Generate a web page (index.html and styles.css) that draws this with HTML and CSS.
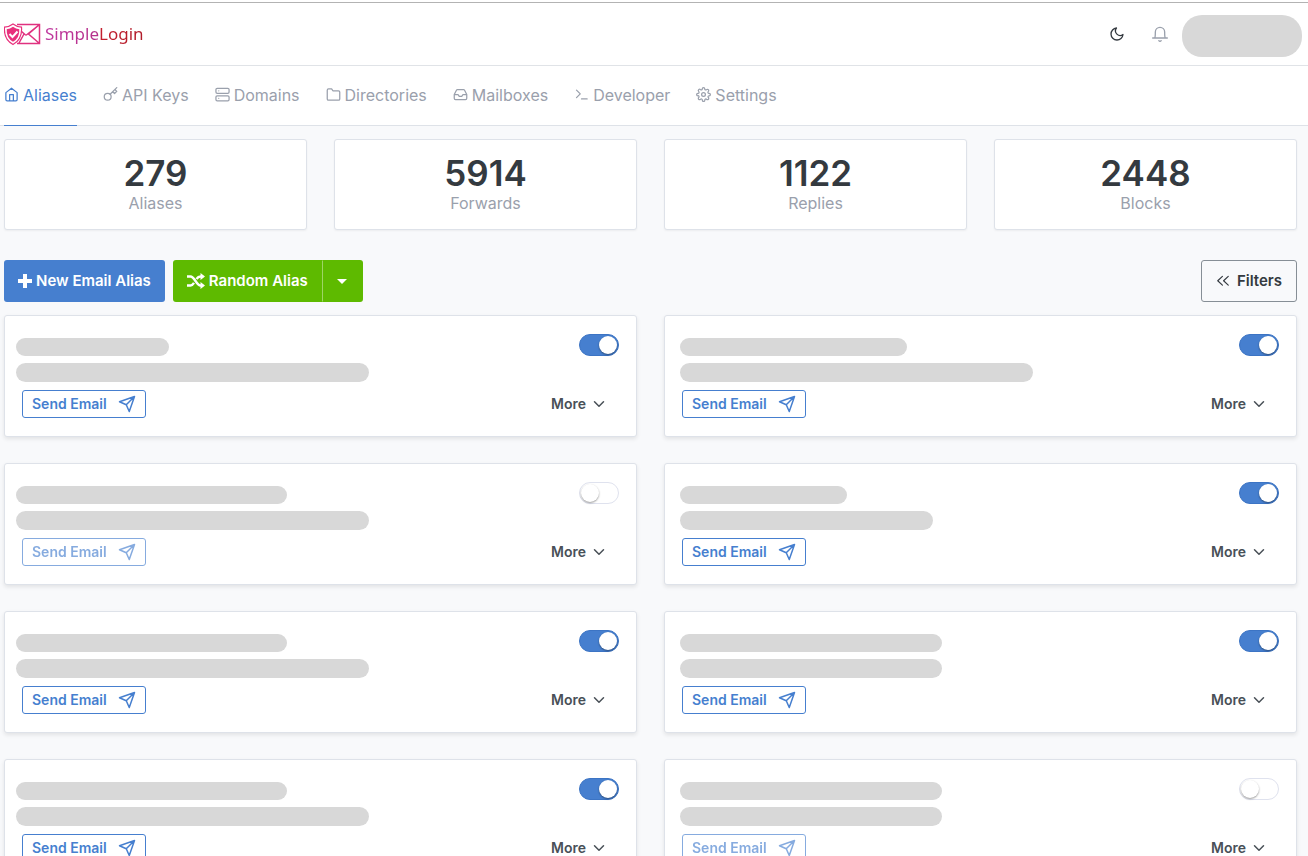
FILE: index.html
```html
<!DOCTYPE html>
<html lang="en">
<head>
<meta charset="utf-8">
<title>Aliases | SimpleLogin</title>
<link rel="stylesheet" href="styles.css">
</head>
<body>
<svg class="sprite" aria-hidden="true">
  <symbol id="send" viewBox="0 0 24 24"><path d="M22 2L11 13M22 2l-7 20-4-9-9-4z"/></symbol>
  <symbol id="down" viewBox="0 0 24 24"><path d="M6 9l6 6 6-6"/></symbol>
</svg>

<header class="header">
  <a class="logo" href="#">
    <svg class="logo-mark" viewBox="0 0 38 24" aria-hidden="true">
      <path d="M13 2.500h22.500v19H13M35.500 2.500L24.500 12l11 9.500M17 9l4 3.500q1 .8 2 0L35.500 2.500M20 12l-5 9" fill="none" stroke="#e0317f" stroke-width="1.500"/>
      <path d="M9 2Q13 5 17.500 5.200q1 12-8.500 17.300Q-.5 17.500.5 5.200 5 5 9 2z" fill="#fff" stroke="#e8307c" stroke-width="1.200"/>
      <path d="M9 4.800q3 2.300 6.300 2.500Q15.800 16 9 19.800 2.200 16 2.700 7.300 6 7.100 9 4.800z" fill="#e8307c" stroke="none"/>
      <path d="M5.500 12l3 3 5-5.500" fill="none" stroke="#fff" stroke-width="2"/>
    </svg>
    <span class="logo-text">SimpleLogin</span>
  </a>
  <div class="header-tools">
    <button class="icon-btn dark" aria-label="Dark mode"><svg viewBox="0 0 24 24"><path d="M21 12.800A9 9 0 1 1 11.200 3 7 7 0 0 0 21 12.800z"/></svg></button>
    <button class="icon-btn" aria-label="Notifications"><svg viewBox="0 0 24 24"><path d="M1 18h22M4 18c1-1 1-3 1-9a7 7 0 0 1 14 0c0 6 0 8 1 9M10.300 22a2 2 0 0 0 3.400 0"/></svg></button>
    <span class="account"></span>
  </div>
</header>

<nav class="nav">
  <a class="active" href="#"><svg viewBox="0 0 24 24"><path d="M3 9l9-7 9 7v11a2 2 0 0 1-2 2H5a2 2 0 0 1-2-2zM9 22V12h6v10"/></svg>Aliases</a>
  <a href="#"><svg viewBox="0 0 24 24"><circle cx="7.500" cy="15.500" r="5.500"/><path d="M11.400 11.600L22 1M15.500 7.500l3 3L22 7l-3-3"/></svg>API Keys</a>
  <a href="#"><svg viewBox="0 0 24 24"><rect x="1.500" y="2" width="21" height="8" rx="2"/><rect x="1.500" y="14" width="21" height="8" rx="2"/><path d="M6 6h.01M6 18h.01"/></svg>Domains</a>
  <a href="#"><svg viewBox="0 0 24 24"><path d="M22 19a2 2 0 0 1-2 2H4a2 2 0 0 1-2-2V5a2 2 0 0 1 2-2h5l2 3h9a2 2 0 0 1 2 2z"/></svg>Directories</a>
  <a href="#"><svg viewBox="0 0 24 24"><path d="M22 12h-6l-2 3h-4l-2-3H2M5.500 5.100L2 12v6a2 2 0 0 0 2 2h16a2 2 0 0 0 2-2v-6l-3.500-6.900A2 2 0 0 0 16.800 4H7.200a2 2 0 0 0-1.700 1.100z"/></svg>Mailboxes</a>
  <a href="#"><svg viewBox="0 0 24 24"><path d="M4 17l6-6-6-6M12 19h9"/></svg>Developer</a>
  <a href="#"><svg viewBox="0 0 24 24"><circle cx="12" cy="12" r="3"/><path d="M19.400 15a1.650 1.650 0 0 0 .33 1.820l.06.06a2 2 0 1 1-2.830 2.830l-.06-.06a1.650 1.650 0 0 0-2.800 1.170V21a2 2 0 0 1-4 0v-.09a1.650 1.650 0 0 0-2.900-1.260l-.06.06a2 2 0 1 1-2.830-2.830l.06-.06A1.650 1.650 0 0 0 3.090 14H3a2 2 0 0 1 0-4h.09a1.650 1.650 0 0 0 1.260-2.900l-.06-.06a2 2 0 1 1 2.830-2.830l.06.06A1.650 1.650 0 0 0 10 3.090V3a2 2 0 0 1 4 0v.09a1.650 1.650 0 0 0 2.820 1.180l.06-.06a2 2 0 1 1 2.830 2.830l-.06.06A1.650 1.650 0 0 0 20.910 10H21a2 2 0 0 1 0 4h-.09a1.650 1.650 0 0 0-1.510 1z"/></svg>Settings</a>
</nav>

<main class="main">
  <section class="stats">
    <div class="stat"><strong>279</strong><span>Aliases</span></div>
    <div class="stat"><strong>5914</strong><span>Forwards</span></div>
    <div class="stat"><strong>1122</strong><span>Replies</span></div>
    <div class="stat"><strong>2448</strong><span>Blocks</span></div>
  </section>

  <div class="toolbar">
    <button class="btn primary"><svg viewBox="0 0 14 14"><path d="M5 0h4v5h5v4H9v5H5V9H0V5h5z"/></svg>New Email Alias</button>
    <div class="btn-group">
      <button class="btn success"><svg class="shuffle" viewBox="0 0 18 16"><path d="M0 3.500h3.500c4 0 6 9 10 9H15M0 12.500h3.500c1.500 0 2.500-1 3.500-2.600M9.500 6c1-1.500 2-2.500 4-2.500H15" fill="none" stroke="#fff" stroke-width="2.400"/><path d="M13.500 0L18 3.500 13.500 7zM13.500 9l4.500 3.500-4.500 3.500z"/></svg>Random Alias</button>
      <button class="btn success split" aria-label="More random alias options"><span class="caret"></span></button>
    </div>
    <button class="btn filters"><svg viewBox="0 0 24 24"><path d="M11 19l-8-7.500L11 4M21 19l-8-7.500L21 4"/></svg>Filters</button>
  </div>

  <section class="aliases" id="aliases"></section>
</main>
<script src="app.js"></script>
</body>
</html>
```
FILE: styles.css
```css
* { box-sizing: border-box; }
body {
  margin: 0;
  height: 100vh;
  overflow: hidden;
  background: #f8f9fb;
  color: #343a40;
  font-family: Inter, "Liberation Sans", sans-serif;
  font-size: 16px;
  line-height: 24px;
}
button { font: inherit; color: inherit; cursor: pointer; }
a { color: inherit; text-decoration: none; }
svg { fill: none; stroke: currentColor; stroke-width: 2; stroke-linecap: round; stroke-linejoin: round; flex: none; }
.sprite { position: absolute; width: 0; height: 0; }

.header {
  display: flex;
  align-items: center;
  justify-content: space-between;
  height: 66px;
  padding: 2px 6px 0 4px;
  background: linear-gradient(#b3b3b3, #b3b3b3) 0 2px / 100% 1px no-repeat #fff;
  border-bottom: 1px solid #e0e3e7;
}
.logo { display: flex; align-items: center; gap: 3px; }
.logo-mark { width: 38px; height: 24px; stroke-linecap: butt; stroke-linejoin: miter; }
.logo-text {
  font-family: "Noto Sans", sans-serif;
  font-size: 17px;
  background: linear-gradient(90deg, #c0399f 0%, #b5308b 54%, #c4202f 56%, #b01c2a 100%);
  background-clip: text;
  -webkit-background-clip: text;
  color: transparent;
}
.header-tools { display: flex; align-items: center; gap: 14px; padding-top: 4px; }
.icon-btn { display: flex; padding: 0 6px; border: 0; background: none; color: #9aa0ac; margin-bottom: 4px; }
.icon-btn svg { width: 16px; height: 16px; }
.icon-btn.dark { color: #343a40; margin-right: 1px; }
.account { width: 120px; height: 42px; margin-left: -6px; border-radius: 20px; background: #d8d8d8; }

.nav {
  display: flex;
  gap: 26px;
  height: 60px;
  padding-left: 4px;
  background: #fff;
  border-bottom: 1px solid #dee2e8;
}
.nav a { display: flex; align-items: center; gap: 4px; color: #9aa0ac; margin-bottom: -1px; padding-bottom: 2px; border-bottom: 1px solid transparent; }
.nav a.active { color: #467fcf; border-color: #467fcf; }
.nav svg { width: 15px; height: 15px; }

.main { padding: 13px 11px 0 4px; }
.stats { display: grid; grid-template-columns: repeat(4, 1fr); gap: 27px; }
.stat, .card {
  background: #fff;
  border: 1px solid #dee2e9;
  border-radius: 3px;
  box-shadow: 0 1px 2px rgba(0, 0, 0, .05);
}
.stat { display: flex; flex-direction: column; align-items: center; height: 91px; padding-top: 15px; color: #9aa0ac; }
.stat strong { color: #343a40; font-size: 35px; line-height: 36px; font-weight: 600; }

.toolbar { display: flex; gap: 8px; margin: 30px 0 13px; }
.btn {
  display: flex;
  align-items: center;
  gap: 4px;
  height: 42px;
  padding: 0 13px;
  border: 1px solid transparent;
  border-radius: 3px;
  font-size: 15px;
  font-weight: 600;
}
.btn svg { width: 14px; height: 14px; }
.primary { background: #467fcf; color: #fff; }
.success { background: #5eba00; color: #fff; }
.primary svg, .success svg { fill: #fff; stroke: none; }
.btn svg.shuffle { width: 18px; height: 16px; stroke-linecap: butt; }
.btn-group { display: flex; }
.btn-group .btn:first-child { border-radius: 3px 0 0 3px; }
.split { width: 41px; justify-content: center; border-radius: 0 3px 3px 0; border-left-color: #9ed566; }
.caret { border: 5px solid transparent; border-top-color: #fff; border-bottom: 0; }
.filters { gap: 7px; padding: 0 14px; margin-left: auto; background: transparent; border-color: #868e96; color: #343a40; }

.aliases { display: grid; grid-template-columns: 1fr 1fr; gap: 26px 27px; }
.card { padding: 18px 17px; height: 122px; box-shadow: 0 2px 4px rgba(0, 0, 0, .09); }
.card-top { display: flex; justify-content: space-between; height: 56px; }
.lines { padding-top: 4px; margin-left: -6px; display: grid; gap: 7px; align-content: start; }
.card:nth-child(even) .lines { margin-left: -2px; }
.bar { display: block; height: 18px; border-radius: 10px; background: #d8d8d8; }
.bar + .bar { height: 19px; }
.card-bottom { display: flex; justify-content: space-between; align-items: center; font-size: 14px; font-weight: 600; }
.send {
  display: flex;
  align-items: center;
  justify-content: space-between;
  width: 124px;
  height: 28px;
  padding: 0 9px;
  border: 1px solid #467fcf;
  border-radius: 3px;
  background: #fff;
  color: #467fcf;
}
.send svg { width: 18px; height: 18px; }
.send:disabled { opacity: .65; }
.more { display: flex; align-items: center; gap: 4px; padding: 0 11px; border: 0; background: none; color: #495057; }
.more svg { width: 18px; height: 18px; }

.switch {
  appearance: none;
  width: 40px;
  height: 22px;
  margin: 0;
  padding: 1px;
  border: 1px solid #dfe2ee;
  border-radius: 11px;
  background: #fff;
  cursor: pointer;
}
.switch::before {
  content: "";
  display: block;
  width: 18px;
  height: 18px;
  border-radius: 50%;
  background: #fff;
  box-shadow: 0 1px 2px rgba(0, 0, 0, .4);
}
.switch:checked { background: #467fcf; border-color: #3c74c4; }
.switch:checked::before { margin-left: 18px; }
```
FILE: app.js
```js
const aliases = [
  { name: 153, info: 353, on: true },
  { name: 227, info: 353, on: true },
  { name: 271, info: 353, on: false },
  { name: 167, info: 253, on: true },
  { name: 271, info: 353, on: true },
  { name: 262, info: 262, on: true },
  { name: 271, info: 353, on: true },
  { name: 262, info: 262, on: false }
];

document.getElementById("aliases").innerHTML = aliases.map((a, i) => `
  <article class="card">
    <div class="card-top">
      <div class="lines">
        <span class="bar" style="width:${a.name}px"></span>
        <span class="bar" style="width:${a.info}px"></span>
      </div>
      <input class="switch" type="checkbox" aria-label="Enable alias ${i + 1}" ${a.on ? "checked" : ""}>
    </div>
    <div class="card-bottom">
      <button class="send" ${a.on ? "" : "disabled"}>Send Email <svg><use href="#send"/></svg></button>
      <button class="more">More <svg><use href="#down"/></svg></button>
    </div>
  </article>`).join("");
```
